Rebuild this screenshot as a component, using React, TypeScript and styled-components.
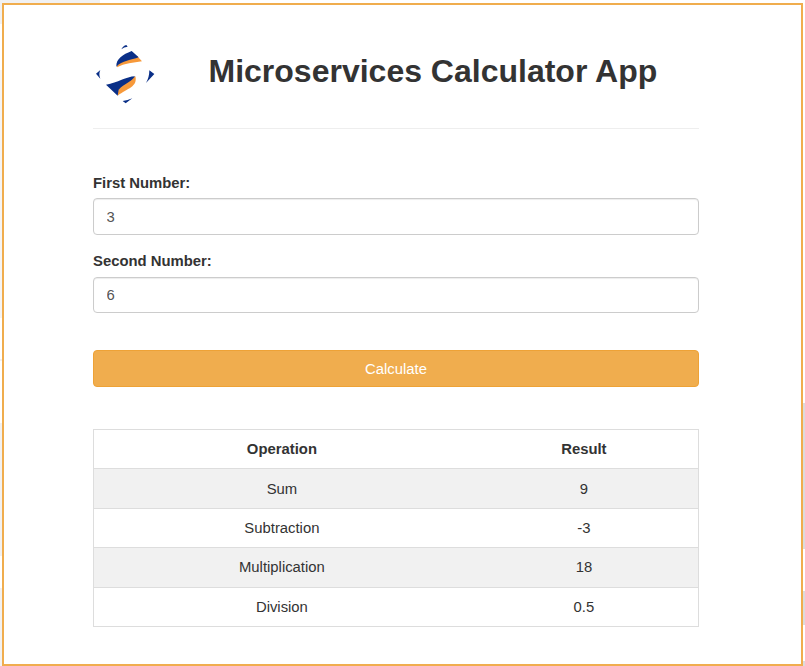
import React, { useState } from "react";
import styled, { createGlobalStyle } from "styled-components";

const GlobalStyle = createGlobalStyle`
  * { box-sizing: border-box; }
  html, body { margin: 0; height: 100%; overflow: hidden; }
  body {
    font-family: "Liberation Sans", Arial, sans-serif;
    font-size: 14.85px;
    color: #333;
    background: #fff;
  }
`;

const Page = styled.div`
  height: 666px;
  padding: 3px 2px 0 2px;
  background:
    linear-gradient(#f1f1f2, #f1f1f2) 0 0 / 100px 3px no-repeat,
    linear-gradient(#f1f1f2 0 24px, #fff 24px 70px, #f4f4f5 70px 318px, #fff 318px 359px, #f1f1f2 359px 361px, #fff 361px 423px, #f1f1f2 423px 556px, #fff 556px 588px, #f1f1f2 588px) 0 0 / 2px 100% no-repeat,
    linear-gradient(#fff 0 403px, #dcdcdc 403px 549px, #fff 549px 591px, #dcdcdc 591px 625px, #fff 625px 661px, #dcdcdc 661px) 100% 0 / 2px 100% no-repeat,
    #fff;
`;

const Panel = styled.main`
  width: 801px;
  height: 662.5px;
  padding: 0 102px 0 89px;
  border: 2px solid #f0ad4e;
  background: #fff;
`;

const Header = styled.header`
  display: flex;
  align-items: flex-start;
  height: 124px;
  border-bottom: 1px solid #eee;
`;

const Logo = styled.svg`
  width: 64px;
  height: 64px;
  margin-top: 38px;
`;

const Title = styled.h1`
  margin: 46px 0 0 51.5px;
  font-size: 32px;
  line-height: 40px;
  font-weight: 700;
  white-space: nowrap;
`;

const Form = styled.form`
  display: flex;
  flex-direction: column;
  padding-top: 43px;
`;

const Label = styled.label`
  height: 26px;
  line-height: 23px;
  font-weight: 700;

  &:last-of-type {
    line-height: 21px;
  }
`;

const NumberInput = styled.input`
  height: 37px;
  margin-bottom: 16px;
  padding: 0 12.5px;
  border: 1px solid #ccc;
  border-radius: 4px;
  background: #fff;
  box-shadow: inset 0 1px 1px rgba(0, 0, 0, 0.075);
  color: #555;
  font: inherit;
  outline: none;

  &:last-of-type {
    height: 36px;
    margin-bottom: 17px;
  }
`;

const CalculateButton = styled.button`
  height: 37px;
  margin-top: 20px;
  padding: 0;
  border: 1px solid #eea236;
  border-radius: 4px;
  background: #f0ad4e;
  color: #fff;
  font: inherit;
`;

const Results = styled.table`
  width: 606px;
  margin-top: 42px;
  border: 1px solid #ddd;
  border-collapse: collapse;
  table-layout: fixed;
  text-align: center;
`;

const Row = styled.tr<{ $striped?: boolean }>`
  height: 39.4px;
  border-bottom: 1px solid #ddd;
  background: ${({ $striped }) => ($striped ? "#f1f1f1" : "#fff")};
`;

const HeadCell = styled.th<{ $width: string }>`
  width: ${({ $width }) => $width};
  padding: 0;
`;

const Cell = styled.td`
  padding: 0;
`;

const formatNumber = (n: number) => String(Math.round(n * 1000) / 1000);

const operations: [string, (a: number, b: number) => number][] = [
  ["Sum", (a, b) => a + b],
  ["Subtraction", (a, b) => a - b],
  ["Multiplication", (a, b) => a * b],
  ["Division", (a, b) => a / b],
];

const BrandMark = () => (
  <Logo viewBox="9 9 192 192" aria-hidden="true">
    <path fill="#f7993a" d="M81 82C80 64 106 50 142 49L156 64C130 68 104 70 81 82Z" />
    <path fill="#0a2f87" d="M79 80C78 56 98 44 125 33L146 52C124 60 96 62 79 80Z" />
    <path fill="#f7993a" d="M83 167L85 146C97 130 122 120 136 109C144 140 112 146 83 167Z" />
    <path fill="#0a2f87" d="M48 134C84 128 108 110 135 109C126 125 102 132 86 149L83 167Z" />
    <path fill="#0a2f87" d="M94 28Q99 17 109 15L113 20Q102 21 94 28Z" />
    <path fill="#0a2f87" d="M18 101L31 90Q25 103 31 116Z" />
    <path fill="#0a2f87" d="M178 91L193 102L168 129Q178 112 178 91Z" />
    <path fill="#0a2f87" d="M98 183Q113 181 127 175L107 190Z" />
  </Logo>
);

export default function App() {
  const [first, setFirst] = useState("3");
  const [second, setSecond] = useState("6");
  const [inputs, setInputs] = useState([3, 6]);

  const calculate = (event: React.FormEvent) => {
    event.preventDefault();
    setInputs([Number(first), Number(second)]);
  };

  return (
    <Page>
      <GlobalStyle />
      <Panel>
        <Header>
          <BrandMark />
          <Title>Microservices Calculator App</Title>
        </Header>
        <Form onSubmit={calculate}>
          <Label htmlFor="first">First Number:</Label>
          <NumberInput id="first" value={first} onChange={(e) => setFirst(e.target.value)} />
          <Label htmlFor="second">Second Number:</Label>
          <NumberInput id="second" value={second} onChange={(e) => setSecond(e.target.value)} />
          <CalculateButton type="submit">Calculate</CalculateButton>
        </Form>
        <Results>
          <thead>
            <Row>
              <HeadCell $width="62.2%">Operation</HeadCell>
              <HeadCell $width="37.8%">Result</HeadCell>
            </Row>
          </thead>
          <tbody>
            {operations.map(([name, apply], index) => (
              <Row key={name} $striped={index % 2 === 0}>
                <Cell>{name}</Cell>
                <Cell>{formatNumber(apply(inputs[0], inputs[1]))}</Cell>
              </Row>
            ))}
          </tbody>
        </Results>
      </Panel>
    </Page>
  );
}
